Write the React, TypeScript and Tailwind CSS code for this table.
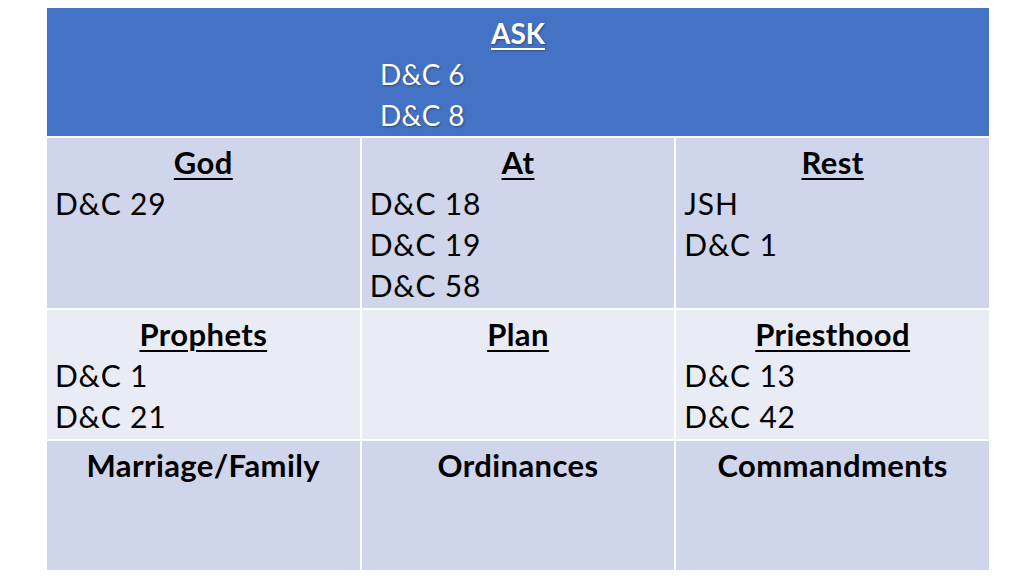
import React from 'react';

type Cell = { title: string; refs: string[]; underline?: boolean };

const rows: { bg: string; height: string; cells: Cell[] }[] = [
  {
    bg: 'bg-[#cfd5ea]',
    height: 'h-[170px]',
    cells: [
      { title: 'God', refs: ['D&C 29'], underline: true },
      { title: 'At', refs: ['D&C 18', 'D&C 19', 'D&C 58'], underline: true },
      { title: 'Rest', refs: ['JSH', 'D&C 1'], underline: true },
    ],
  },
  {
    bg: 'bg-[#e9ebf5]',
    height: 'h-[129px]',
    cells: [
      { title: 'Prophets', refs: ['D&C 1', 'D&C 21'], underline: true },
      { title: 'Plan', refs: [], underline: true },
      { title: 'Priesthood', refs: ['D&C 13', 'D&C 42'], underline: true },
    ],
  },
  {
    bg: 'bg-[#cfd5ea]',
    height: 'h-[129px]',
    cells: [
      { title: 'Marriage/Family', refs: [] },
      { title: 'Ordinances', refs: [] },
      { title: 'Commandments', refs: [] },
    ],
  },
];

const headFont = { fontFamily: 'Lato, "Open Sans", sans-serif' };

export default function App() {
  return (
    <div className="w-[1024px] h-[576px] bg-white pt-[8px] pl-[47px]" style={headFont}>
      <div className="w-[942px] grid grid-cols-3 gap-[2px] bg-white">
        <div className="col-span-3 h-[128px] bg-[#4472c4] pt-[5px] text-white text-[28px] leading-[41px] [text-shadow:1px_1px_2px_rgba(0,0,0,0.35)]">
          <div className="text-center font-bold underline decoration-2 underline-offset-4">ASK</div>
          <div className="pl-[333px] tracking-[0.3px]">D&amp;C 6</div>
          <div className="pl-[333px] tracking-[0.3px]">D&amp;C 8</div>
        </div>
        {rows.map((row, i) =>
          row.cells.map((c, j) => (
            <div
              key={`${i}-${j}`}
              className={`${row.bg} ${row.height} pt-[4px] pl-[8px] pr-[8px] text-black leading-[41px]`}
            >
              <div
                className={`text-center font-bold text-[31px] tracking-[0.4px] ${
                  c.underline ? 'underline decoration-2 underline-offset-4' : ''
                }`}
              >
                {c.title}
              </div>
              {c.refs.map((r) => (
                <div key={r} className="text-[30px] tracking-[0.8px]">
                  {r}
                </div>
              ))}
            </div>
          ))
        )}
      </div>
    </div>
  );
}
